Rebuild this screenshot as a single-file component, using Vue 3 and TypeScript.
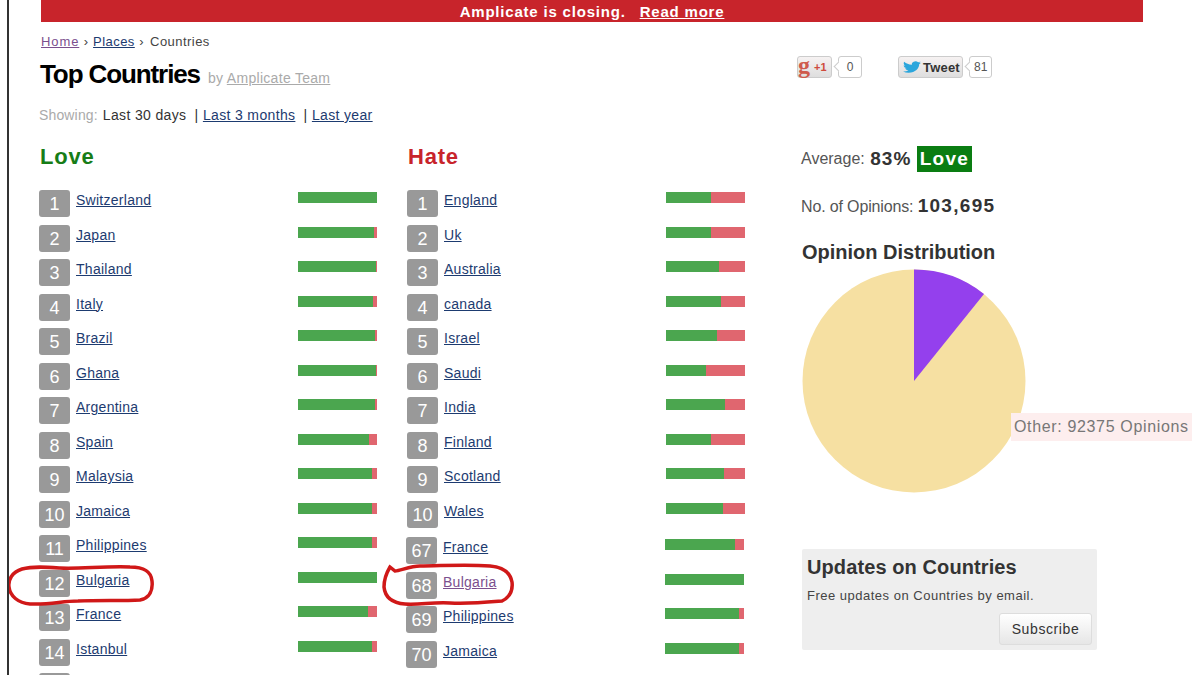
<template>
  <div class="page">
    <div class="banner">
      <span>Amplicate is closing.</span>
      <a class="banner-link">Read more</a>
    </div>

    <div class="main">
      <div class="content">
        <div class="crumbs">
          <a class="visited">Home</a><i>›</i><a>Places</a><i>›</i><span>Countries</span>
        </div>
        <div class="title-row">
          <h1>Top Countries</h1>
          <span class="by">by <a>Amplicate Team</a></span>
        </div>
        <div class="showing">
          <span class="muted">Showing:</span>
          <span class="current">Last 30 days</span>
          <span class="sep">|</span><a>Last 3 months</a>
          <span class="sep">|</span><a>Last year</a>
        </div>

        <div class="columns">
          <section v-for="col in columns" :key="col.title" class="column">
            <h2 :class="col.cls">{{ col.title }}</h2>
            <div class="rows">
              <div
                v-for="row in col.rows"
                :key="row.rank"
                class="row"
                :class="{ shifted: row.rank > 60 }"
              >
                <span class="badge">{{ row.name ? row.rank : '' }}</span>
                <a class="name" :class="{ visited: col.cls === 'hate' && row.rank === 68 }">{{ row.name }}</a>
                <span v-if="row.love" class="bar">
                  <span class="bar-love" :style="{ width: row.love + '%' }"></span>
                </span>
              </div>
            </div>
          </section>
        </div>
      </div>

      <aside class="side">
        <div class="social">
          <span class="share gplus"><b class="g">g</b><b class="plus">+1</b></span>
          <span class="count first">0</span>
          <span class="share tweet">
            <svg width="18" height="14" viewBox="0 0 24 24" preserveAspectRatio="none">
              <path fill="#2ba6dc" d="M23.953 4.57a10 10 0 01-2.825.775 4.958 4.958 0 002.163-2.723c-.951.555-2.005.959-3.127 1.184a4.92 4.92 0 00-8.384 4.482C7.69 8.095 4.067 6.13 1.64 3.162a4.822 4.822 0 00-.666 2.475c0 1.71.87 3.213 2.188 4.096a4.904 4.904 0 01-2.228-.616v.06a4.923 4.923 0 003.946 4.827 4.996 4.996 0 01-2.212.085 4.936 4.936 0 004.604 3.417 9.867 9.867 0 01-6.102 2.105c-.39 0-.779-.023-1.17-.067a13.995 13.995 0 007.557 2.209c9.053 0 13.998-7.496 13.998-13.985 0-.21 0-.42-.015-.63A9.935 9.935 0 0024 4.59z" />
            </svg>
            <b>Tweet</b>
          </span>
          <span class="count">81</span>
        </div>

        <div class="stats">
          <div class="average">
            <span>Average:</span>
            <b>83%</b>
            <span class="love-tag">Love</span>
          </div>
          <div class="opinions">No. of Opinions: <b>103,695</b></div>
          <h3>Opinion Distribution</h3>

          <div class="pie-wrap">
            <svg class="pie" width="224" height="224" viewBox="0 0 224 224">
              <circle cx="112" cy="112" r="111.5" fill="#f6e0a2" />
              <path d="M112 112 L112 .5 A111.5 111.5 0 0 1 182 25 Z" fill="#9440ed" />
            </svg>
            <div class="tip">Other: 92375 Opinions</div>
          </div>

          <div class="updates">
            <h4>Updates on Countries</h4>
            <p>Free updates on Countries by email.</p>
            <div class="updates-foot">
              <button type="button">Subscribe</button>
            </div>
          </div>
        </div>
      </aside>
    </div>

    <!-- hand drawn circles from the person who took the screenshot -->
    <svg class="scribble" width="1200" height="675" viewBox="0 0 1200 675">
      <path d="M22 569 C12 572 8 580 9 587 C10 596 18 603 30 604 C50 605 62 601 78 601 C100 600 122 601 140 600 C150 598 153 590 152 581 C151 571 144 567 130 567 C105 566 80 569 60 568 C46 567 33 566 22 569 Z" />
      <path d="M390 567 C387 572 384 580 384 587 C385 597 392 603 405 604 C420 605 432 602 450 603 C470 604 490 602 502 601 C510 597 513 590 512 582 C510 572 503 567 490 566 C465 564 440 566 420 566 C410 566 400 571 395 571 Z" />
    </svg>
  </div>
</template>

<script setup lang="ts">
interface Row {
  rank: number
  name: string
  love: number
}

const loveRows: Row[] = [
  { rank: 1, name: 'Switzerland', love: 100 },
  { rank: 2, name: 'Japan', love: 96 },
  { rank: 3, name: 'Thailand', love: 98 },
  { rank: 4, name: 'Italy', love: 95 },
  { rank: 5, name: 'Brazil', love: 97 },
  { rank: 6, name: 'Ghana', love: 98 },
  { rank: 7, name: 'Argentina', love: 97 },
  { rank: 8, name: 'Spain', love: 90 },
  { rank: 9, name: 'Malaysia', love: 94 },
  { rank: 10, name: 'Jamaica', love: 93 },
  { rank: 11, name: 'Philippines', love: 93 },
  { rank: 12, name: 'Bulgaria', love: 100 },
  { rank: 13, name: 'France', love: 88 },
  { rank: 14, name: 'Istanbul', love: 93 },
  { rank: 15, name: '', love: 0 },
]

const hateRows: Row[] = [
  { rank: 1, name: 'England', love: 57 },
  { rank: 2, name: 'Uk', love: 57 },
  { rank: 3, name: 'Australia', love: 67 },
  { rank: 4, name: 'canada', love: 70 },
  { rank: 5, name: 'Israel', love: 64 },
  { rank: 6, name: 'Saudi', love: 51 },
  { rank: 7, name: 'India', love: 74 },
  { rank: 8, name: 'Finland', love: 57 },
  { rank: 9, name: 'Scotland', love: 73 },
  { rank: 10, name: 'Wales', love: 72 },
  { rank: 67, name: 'France', love: 88 },
  { rank: 68, name: 'Bulgaria', love: 100 },
  { rank: 69, name: 'Philippines', love: 93 },
  { rank: 70, name: 'Jamaica', love: 93 },
  { rank: 71, name: '', love: 0 },
]

const columns = [
  { title: 'Love', cls: 'love', rows: loveRows },
  { title: 'Hate', cls: 'hate', rows: hateRows },
]
</script>

<style>
html,
body {
  margin: 0;
  height: 675px;
  overflow: hidden;
  background: #fff;
}
</style>

<style scoped>
.page {
  position: relative;
  box-sizing: border-box;
  height: 675px;
  margin-left: 7px;
  padding-left: 32px;
  border-left: 2px solid #333;
  overflow: hidden;
  font-family: "Liberation Sans", Arial, sans-serif;
  color: #333;
}

a {
  color: #1d3b70;
  text-decoration: underline;
}

a.visited {
  color: #7b4f8e;
}

.banner {
  width: 1102px;
  height: 22px;
  display: flex;
  justify-content: center;
  gap: 14px;
  align-items: center;
  background: #c8242b;
  color: #fff;
  font-size: 15px;
  font-weight: bold;
  letter-spacing: 0.8px;
  box-sizing: border-box;
}

.banner-link {
  color: #fff;
}

.main {
  display: flex;
  margin-left: -2px;
}

.content {
  width: 756px;
}

.crumbs {
  margin-top: 12px;
  height: 16px;
  line-height: 16px;
  font-size: 13px;
  letter-spacing: 0.45px;
  padding-left: 2px;
  color: #444;
}

.crumbs a.visited {
  letter-spacing: 0.9px;
}

.crumbs i {
  font-style: normal;
  margin: 0 4.5px;
}

.crumbs span {
  margin-left: 1.5px;
}

.title-row {
  display: flex;
  align-items: baseline;
  gap: 8px;
  margin-top: 8px;
  height: 32px;
  padding-left: 1px;
}

h1 {
  margin: 0;
  font-size: 26px;
  line-height: 32px;
  color: #000;
  letter-spacing: -1.1px;
}

.by {
  font-size: 14px;
  color: #aaa;
  letter-spacing: 0.3px;
}

.by a {
  color: #aaa;
}

.showing {
  margin-top: 15px;
  height: 20px;
  line-height: 20px;
  font-size: 14px;
  letter-spacing: 0.35px;
}

.muted {
  color: #aaa;
  letter-spacing: 0.15px;
}

.current {
  margin-left: 5px;
}

.sep {
  margin: 0 4.5px 0 8px;
}

.columns {
  display: flex;
  margin-top: 18px;
}

.column {
  width: 368px;
}

h2 {
  margin: 0;
  height: 28px;
  line-height: 28px;
  font-size: 22px;
  letter-spacing: 0.8px;
  padding-left: 1px;
}

h2.love {
  color: #177d17;
}

h2.hate {
  color: #c8242b;
}

.rows {
  margin-top: 19px;
}

.row {
  display: flex;
  height: 34.5px;
}

.row.shifted {
  margin-left: -1px;
}

.row:not(.shifted) + .row.shifted {
  margin-top: 2px;
}

.badge {
  width: 31px;
  height: 27px;
  flex: none;
  border-radius: 3px;
  background: #999;
  color: #fff;
  font-size: 18px;
  line-height: 28px;
  text-align: center;
}

.name {
  width: 221.7px;
  height: 19px;
  margin: 2px 0 0 6px;
  font-size: 14px;
  line-height: 17px;
  letter-spacing: 0.27px;
}

.bar {
  width: 79.5px;
  height: 11px;
  margin-top: 2px;
  background: #e0666f;
}

.bar-love {
  display: block;
  height: 100%;
  background: #4ba64f;
}

.side {
  width: 400px;
  padding-top: 34px;
  margin-left: 2px;
}

.social {
  display: flex;
  align-items: center;
  height: 22px;
}

.share {
  box-sizing: border-box;
  display: flex;
  align-items: center;
  height: 22px;
  border: 1px solid #ccc;
  border-radius: 3px;
  background: linear-gradient(#f6f2f2, #dedede);
  font-size: 13px;
  color: #333;
}

.gplus {
  width: 35px;
}

.g {
  color: #cf5a4c;
  font-family: "Liberation Serif", serif;
  font-size: 24px;
  line-height: 20px;
  margin-top: -5px;
}

.plus {
  color: #cf4a3c;
  font-size: 11px;
  margin-left: 4px;
}

.tweet {
  width: 65px;
  margin-left: 36px;
  padding-left: 4px;
  gap: 2px;
  letter-spacing: 0.2px;
}

.count {
  position: relative;
  box-sizing: border-box;
  height: 22px;
  margin-left: 6px;
  padding: 0 4px;
  min-width: 22px;
  border: 1px solid #ccc;
  border-radius: 3px;
  background: #fff;
  font-size: 12px;
  line-height: 20px;
  text-align: center;
  color: #555;
}

/* small notch pointing at the share button */
.count::before {
  content: "";
  position: absolute;
  left: -4px;
  top: 6px;
  width: 6px;
  height: 6px;
  border-left: 1px solid #ccc;
  border-bottom: 1px solid #ccc;
  background: #fff;
  transform: rotate(45deg);
}

.count.first {
  width: 24px;
}

.stats {
  padding-left: 4px;
}

.average {
  display: flex;
  align-items: center;
  gap: 5.5px;
  margin-top: 68px;
  height: 26px;
  font-size: 16px;
  color: #555;
}

.average b {
  font-size: 19px;
  letter-spacing: 1px;
  color: #333;
}

.love-tag {
  background: #0a7d12;
  color: #fff;
  font-weight: bold;
  font-size: 19px;
  line-height: 26px;
  padding: 0 3px;
  letter-spacing: 1.2px;
}

.opinions {
  margin-top: 21px;
  height: 26px;
  line-height: 26px;
  font-size: 16px;
  letter-spacing: -0.15px;
  color: #555;
}

.opinions b {
  font-size: 19px;
  letter-spacing: 1.3px;
  color: #333;
}

h3 {
  margin: 20px 0 0 1px;
  height: 26px;
  line-height: 26px;
  font-size: 20px;
  color: #333;
}

.pie-wrap {
  position: relative;
  height: 224px;
  margin: 4px 0 0 1px;
}

.pie {
  display: block;
}

.tip {
  position: absolute;
  left: 209px;
  top: 144px;
  width: 181px;
  height: 28px;
  line-height: 28px;
  background: #fdeeee;
  color: #777;
  font-size: 16px;
  padding-left: 3px;
  box-sizing: border-box;
  letter-spacing: 0.65px;
  white-space: nowrap;
}

.updates {
  box-sizing: border-box;
  width: 295px;
  height: 101px;
  margin: 56px 0 0 1px;
  padding: 7px 5px 0;
  border-radius: 2px;
  background: #eee;
}

h4 {
  margin: 0;
  font-size: 20px;
  line-height: 22px;
  color: #333;
  letter-spacing: 0.1px;
}

.updates p {
  margin: 10px 0 0;
  font-size: 13px;
  line-height: 15px;
  letter-spacing: 0.5px;
  color: #444;
}

.updates-foot {
  display: flex;
  justify-content: flex-end;
  margin-top: 10px;
}

button {
  width: 93px;
  height: 32px;
  padding: 0;
  border: 1px solid #ddd;
  border-radius: 3px;
  background: linear-gradient(#fff, #e6e6e6);
  font-family: inherit;
  font-size: 14px;
  letter-spacing: 0.6px;
  color: #333;
}

.scribble {
  position: absolute;
  left: -9px;
  top: 0;
  fill: none;
  stroke: #d01818;
  stroke-width: 3.5;
  pointer-events: none;
}
</style>
